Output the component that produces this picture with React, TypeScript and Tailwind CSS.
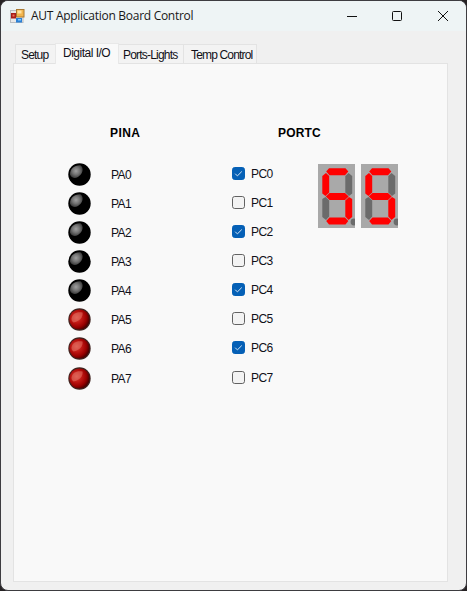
import React from "react";

const ROWS = [0, 1, 2, 3, 4, 5, 6, 7];

function Led({ on }: { on: boolean }) {
  const id = on ? "led-on" : "led-off";
  return (
    <svg width="24" height="24" viewBox="0 1 24 24" className="block shrink-0">
      <defs>
        <radialGradient id="led-off" gradientUnits="userSpaceOnUse" cx="9" cy="9" r="8">
          <stop offset="0" stopColor="#a0a0a0" />
          <stop offset="0.45" stopColor="#747474" />
          <stop offset="1" stopColor="#2c2c2c" />
        </radialGradient>
        <radialGradient id="led-on" cx="0.36" cy="0.4" r="0.65">
          <stop offset="0" stopColor="#d84840" />
          <stop offset="0.4" stopColor="#c01814" />
          <stop offset="0.75" stopColor="#990000" />
          <stop offset="1" stopColor="#480000" />
        </radialGradient>
      </defs>
      <circle cx="12.5" cy="12.5" r="11.2" fill={on ? "#402420" : "#000"} />
      {on ? (
        <>
          <circle cx="12.5" cy="12.5" r="10.1" fill={`url(#${id})`} />
          <path d="M4.5 11.5C5.5 6.5 9.5 4.5 15.5 5.5C16.5 9.5 12.5 14.5 6.5 15.5C4.5 14.5 4.5 12.5 4.5 11.5Z" fill="#e88070" opacity="0.5" />
        </>
      ) : (
        <path d="M3 12.5C3 6.5 7.5 3 13.5 3.3C17.5 6.5 15.5 12.5 11 15C7.5 17 4 15.5 3 12.5Z" fill={`url(#${id})`} />
      )}
    </svg>
  );
}

function Check({ on }: { on: boolean }) {
  return (
    <svg width="13" height="13" viewBox="0 0 13 13" className="block shrink-0">
      <rect x="0.5" y="0.5" width="12" height="12" rx="2.2" fill={on ? "#0560b6" : "#f3f3f3"} stroke={on ? "#0560b6" : "#626262"} />
      {on && <path d="M3.2 6.7L5.4 8.9L9.8 4.5" fill="none" stroke="#d5e5f4" strokeWidth="1" />}
    </svg>
  );
}

function Digit() {
  const red = "#ff0000";
  const gray = "#6b6b6b";
  return (
    <svg width="37" height="64" viewBox="0 0 37 64" className="block">
      <rect width="37" height="64" fill="#a9a9a9" />
      <g>
        <path d="M8.2 7.5L11 4.3H27.5L30.3 7.5L27 11.2H11.5Z" fill={red} />
        <path d="M4.3 12L8 9L11.2 12V28.5L7.5 32L4.3 29.5Z" fill={red} />
        <path d="M27.3 12L30.5 9L34.2 12V29.5L31 32L27.3 28.5Z" fill={gray} />
        <path d="M7.8 32.5L11.5 29.1H27L30.7 32.5L27 36.1H11.5Z" fill={red} />
        <path d="M4.3 35L7.5 33L11.2 36.5V52.5L8 56L4.3 53Z" fill={gray} />
        <path d="M27.3 36.5L31 33L34.2 35V53L30.5 56L27.3 52.5Z" fill={red} />
        <path d="M8.2 57L11.5 53.5H27L30.3 57L27.5 60.5H11Z" fill={red} />
      </g>
      <circle cx="36" cy="58" r="3.4" fill="#6b6b6b" />
    </svg>
  );
}

function AppIcon() {
  return (
    <svg width="15" height="15" viewBox="0 0 15 15" className="block">
      <rect x="0.5" y="1.5" width="12.5" height="12" fill="#e8e8e8" stroke="#b8bcc0" />
      <rect x="1" y="4" width="5" height="5.5" fill="#a81c18" />
      <rect x="2.5" y="5.5" width="2" height="2" fill="#ee7058" />
      <rect x="6.5" y="0.5" width="7.5" height="7.5" fill="#f2b54c" stroke="#a87832" />
      <rect x="7.5" y="1.5" width="4" height="3" fill="#ffe2a0" />
      <rect x="6" y="9" width="6" height="4.5" fill="#2b80d4" />
      <rect x="8" y="10" width="3" height="1.5" fill="#80c8ff" />
    </svg>
  );
}

const label = "whitespace-nowrap text-[12px] leading-[14px] text-[#101018]";

export default function App() {
  return (
    <div className="h-[591px] w-[467px] overflow-hidden bg-[#262224] font-['Liberation_Sans',Arial,sans-serif]">
      <div className="flex h-full w-full flex-col overflow-hidden rounded-[8px] border border-[#3d3c40] bg-[#f0f0f0]">
        <header className="flex h-[30px] shrink-0 items-center bg-[#eef4f5] pl-[9px]">
          <AppIcon />
          <h1 className="ml-[6px] w-[300px] whitespace-nowrap font-['Open_Sans',sans-serif] text-[12px] leading-[16px] tracking-[-0.28px] text-[#181818]">
            AUT Application Board Control
          </h1>
          <svg width="102" height="12" viewBox="0 0 102 12" className="-mt-px ml-[15px] block" fill="none" stroke="#111">
            <path d="M1 6.5H11" />
            <rect x="46.5" y="1.5" width="9" height="9" rx="1" />
            <path d="M92 1L102 11M102 1L92 11" />
          </svg>
        </header>

        <main className="flex min-h-0 flex-1 flex-col pb-[8px] pl-[12px] pr-[18px] pt-[12px]">
          <nav className="z-10 -mb-px flex h-[21px] shrink-0 items-end pl-[2px]">
            <div className="mb-px h-[19px] w-[40px] border border-b-0 border-r-0 border-[#e3e3e3] bg-[#f3f3f3] pl-[5px] pt-[3px]">
              <div className={`${label} tracking-[-0.8px]`}>Setup</div>
            </div>
            <div className="h-[21px] w-[64px] border border-b-0 border-[#e8e8e8] bg-[#f9f9f9] pl-[7px] pt-[2px]">
              <div className={`${label} tracking-[-0.5px]`}>Digital I/O</div>
            </div>
            <div className="mb-px h-[19px] w-[65px] border border-b-0 border-l-0 border-[#e3e3e3] bg-[#f3f3f3] pl-[4px] pt-[3px]">
              <div className={`${label} tracking-[-0.8px]`}>Ports-Lights</div>
            </div>
            <div className="mb-px h-[19px] w-[73px] border border-b-0 border-l-0 border-[#e3e3e3] bg-[#f3f3f3] pl-[7px] pt-[3px]">
              <div className={`${label} tracking-[-0.83px]`}>Temp Control</div>
            </div>
          </nav>

          <section className="flex flex-1 items-start border border-[#e3e3e3] bg-[#f9f9f9] pt-[62px]">
            <div className="ml-[53px] w-[165px]">
              <h2 className="ml-[43px] text-[12px] font-bold leading-[14px] tracking-[0.4px] text-black">PINA</h2>
              <div className="mt-[20px]">
                {ROWS.map((n) => (
                  <div key={n} className="flex h-[29px] items-center last:h-[31px]">
                    <Led on={n >= 5} />
                    <span className={`${label} ml-[20px] tracking-[-0.6px]`}>PA{n}</span>
                  </div>
                ))}
              </div>
            </div>
            <div className="w-[86px]">
              <h2 className="ml-[46px] text-[12px] font-bold leading-[14px] tracking-[0.15px] text-black">PORTC</h2>
              <div className="mt-[19px]">
                {ROWS.map((n) => (
                  <div key={n} className="flex h-[29px] items-center last:h-[31px]">
                    <Check on={n % 2 === 0} />
                    <span className={`${label} ml-[6px] tracking-[-0.6px]`}>PC{n}</span>
                  </div>
                ))}
              </div>
            </div>
            <div className="mt-[38px] flex gap-[6px]">
              <Digit />
              <Digit />
            </div>
          </section>
        </main>
      </div>
    </div>
  );
}
